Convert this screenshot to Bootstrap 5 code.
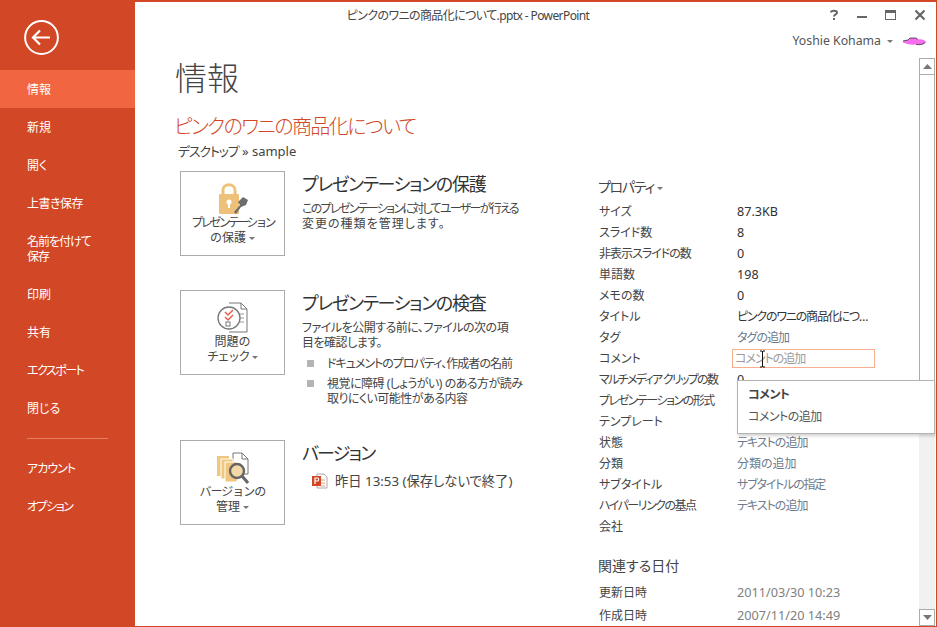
<!DOCTYPE html>
<html lang="ja">
<head>
<meta charset="utf-8">
<title>情報</title>
<link href="https://cdn.jsdelivr.net/npm/bootstrap@5.3.0/dist/css/bootstrap.min.css" rel="stylesheet">
<style>
html,body{height:100%;margin:0;overflow:hidden;background:#fff}
body{font-family:"Noto Sans","Noto Sans CJK JP",sans-serif;font-size:12px;color:#444;font-feature-settings:"palt"}
.frame{width:937px;height:627px;border:solid #d24726;border-width:2px 1px 1px 0;overflow:hidden;position:relative}
.side{width:135px;background:#d24726;color:#fff;flex:none}
.backbtn{height:68px;padding:18px 0 0 24px}
.mitem{display:flex;align-items:center;height:38px;padding-left:27px;font-size:12px;line-height:15px;color:#fff}
.mitem.tall{height:53px}
.mitem.on{background:#f16640}
.msep{height:22px;display:flex;align-items:center;padding:0 27px}
.msep i{display:block;width:100%;height:1px;background:#e4805f}
.mainp{min-width:0;position:relative}
.topbar{height:30px;position:relative;flex:none}
.wtitle{font-size:12px;text-align:center;padding-top:6px;line-height:16px;color:#444;margin-left:-135px;letter-spacing:-.6px}
.wbtns{position:absolute;right:10px;top:7px;gap:17px;color:#666}
.userrow{height:26px;flex:none;justify-content:flex-end;padding:0 10px 8px 0;gap:6px;font-size:12.3px;color:#555}
.bodyrow{min-height:0;overflow:hidden}
.caret{display:inline-block;width:0;height:0;border:solid transparent;border-width:3px 3px 0;border-top-color:#777;vertical-align:middle}
.scrollcol{width:16px;flex:none;margin-right:1px;background:#f1f1f1;position:relative}
.sbtn{height:17px;flex:none;border:1px solid #ababab;background:#fff;display:flex;align-items:center;justify-content:center}
.sthumb{height:351px;flex:none;border:1px solid #ababab;border-top:0;background:#fff}
.sfill{flex:1}
.content{padding:0 0 0 42px;min-width:0}
.pagetitle{font-size:32px;line-height:40px;font-weight:300;color:#444;margin:0 0 0 -2px;height:42px}
.doctitle{font-size:20px;line-height:28px;color:#d24726;margin:13px 0 0 -3px;font-weight:300;letter-spacing:-1.6px}
.docpath{font-size:13px;line-height:18px;color:#444;margin:1px 0 0 1px}
.cols{margin-top:11px;margin-left:3px}
.leftcol{width:418px;flex:none}
.sect{height:150px;gap:17px}
.sect.firstsect{height:119px}
.bigbtn{width:105px;height:85px;border:1px solid #ababab;background:#fff;padding:0;text-align:center;font-size:12px;line-height:15px;color:#444;display:flex;flex-direction:column;align-items:center;flex:none;border-radius:0}
.bigbtn svg{margin-top:9px;margin-bottom:-2px;flex:none}
.secth{font-size:18px;line-height:24px;color:#333;margin:1px 0 5px;font-weight:400;letter-spacing:-1.3px;white-space:nowrap}
.secth.ver{letter-spacing:-1.8px}
.sectp{font-size:12px;line-height:15px;margin:0;color:#444;width:225px;white-space:nowrap}
.bul{list-style:none;padding:0;margin:6px 0 0}
.bul li{position:relative;padding-left:25px;line-height:15px;margin-bottom:5px;width:228px;white-space:nowrap}
.bul li::before{content:"";position:absolute;left:5px;top:4px;width:7px;height:7px;background:#b4b4b4}
.verline{font-size:13.3px;line-height:18px;margin:7px 0 0 10px;gap:7px;display:flex;align-items:center}
.rightcol{width:310px;padding-top:6px;margin-left:1px}
.proph{font-size:14px;line-height:20px;color:#444;margin:0 0 4px -1px;font-weight:400;letter-spacing:-1.3px}
.proph .caret{margin-left:3px}
.prow{height:21px;display:flex;align-items:center;line-height:15px;white-space:nowrap}
.prow.dt{height:23px}
.plab{width:138px;flex:none;color:#444}
.pval{color:#333;font-size:12.6px}
.pmuted{color:#6d7b8d}
.pgrey{color:#808080;font-size:12.7px}
.commentbox{width:143px;height:19px;border:1px solid #f7b08f;margin-left:-5px;padding-left:2px;color:#9a9a9a;line-height:17px;position:relative}
.ibeam{position:absolute;left:26px;top:0;width:7px;height:18px}
.gaph{font-size:14px;line-height:20px;color:#444;margin:19px 0 5px -1px;font-weight:400}
.tip{position:absolute;left:602px;top:322px;width:198px;height:54px;background:#fff;border:1px solid #b4b4b4;box-shadow:1px 2px 3px rgba(0,0,0,.18);padding:6px 10px;line-height:15px;z-index:5;margin:0}
.tip b{display:block;font-weight:700;color:#444;margin-bottom:7px}
.tip span{color:#555}
.ls5{letter-spacing:-.5px}
.ls10{letter-spacing:-1px}
.ls12{letter-spacing:-1.2px}
.ls15{letter-spacing:-1.5px}
.ls17{letter-spacing:-1.7px}
.ls28{letter-spacing:-2.8px}
.lsp{letter-spacing:1px}
.val12{font-size:12px;letter-spacing:-1.2px}
</style>
</head>
<body>
<div class="frame d-flex">
  <nav class="side d-flex flex-column">
    <div class="backbtn">
      <svg width="36" height="36" viewBox="0 0 36 36"><circle cx="17.5" cy="17.5" r="16.4" fill="none" stroke="#fff" stroke-width="2"/><path d="M9 17.5H26M16 10.5L9 17.5L16 24.5" fill="none" stroke="#fff" stroke-width="2.2"/></svg>
    </div>
    <div class="mitem on">情報</div>
    <div class="mitem">新規</div>
    <div class="mitem">開く</div>
    <div class="mitem ls5">上書き保存</div>
    <div class="mitem tall ls10">名前を付けて<br>保存</div>
    <div class="mitem">印刷</div>
    <div class="mitem">共有</div>
    <div class="mitem ls15">エクスポート</div>
    <div class="mitem">閉じる</div>
    <div class="msep"><i></i></div>
    <div class="mitem ls10">アカウント</div>
    <div class="mitem ls15">オプション</div>
  </nav>
  <div class="mainp flex-grow-1 d-flex flex-column">
    <div class="topbar">
      <div class="wtitle">ピンクのワニの商品化について.pptx - PowerPoint</div>
      <div class="wbtns d-flex align-items-center">
        <svg width="10" height="12" viewBox="0 0 10 12"><path d="M2 3.5C2 1 8 1 8 3.5C8 5.5 5 5.3 5 7.5M5 9V11" fill="none" stroke="#666" stroke-width="2"/></svg>
        <svg width="12" height="12" viewBox="0 0 12 12"><rect x="1" y="7" width="10" height="2" fill="#666"/></svg>
        <svg width="12" height="12" viewBox="0 0 12 12"><rect x=".5" y="1.5" width="10" height="9" fill="none" stroke="#666"/><rect x="0" y="1" width="11" height="3" fill="#666"/></svg>
        <svg width="12" height="12" viewBox="0 0 12 12"><path d="M1.5 1.5L10.5 10.5M10.5 1.5L1.5 10.5" stroke="#666" stroke-width="2.2"/></svg>
      </div>
    </div>
    <div class="userrow d-flex align-items-center">
      <span>Yoshie Kohama</span><span class="caret"></span>
      <svg class="ms-1" width="23" height="9" viewBox="0 0 23 9"><path d="M0 4L5 3L7 1H13L15 2.5C19 2 22 3 22.500 5C22 7.500 18 8 13 7.500C8 8 3 7 0 5.500Z" fill="#f76df0"/><path d="M0 4L5 3L7 1H13L15 2.5" fill="none" stroke="#222" stroke-width=".7"/><path d="M13 7.500C17 8 21 7.500 22.500 5" fill="none" stroke="#222" stroke-width=".7"/></svg>
    </div>
    <div class="bodyrow d-flex flex-grow-1 position-relative">
      <div class="content flex-grow-1">
        <h1 class="pagetitle">情報</h1>
        <h2 class="doctitle">ピンクのワニの商品化について</h2>
        <div class="docpath"><span class="ls12">デスクトップ</span> » sample</div>
        <div class="cols d-flex">
          <div class="leftcol">
            <div class="sect firstsect d-flex">
              <button class="bigbtn btn" type="button">
                <svg width="36" height="36" viewBox="0 0 36 36"><path d="M8 13V9C8 2 20 2 20 9V13" fill="none" stroke="#eec17a" stroke-width="3"/><rect x="4" y="13" width="20" height="20" rx="1" fill="#eec17a"/><circle cx="14" cy="21" r="2.500" fill="#fff"/><rect x="13" y="21" width="2" height="6" fill="#fff"/><path d="M19 31L25 24L23 21L28 16L33 19L31 24L26 26L21 33Z" fill="#6d6d6d"/></svg>
                <span><span class="ls28">プレゼンテーション</span><br>の保護 <span class="caret"></span></span>
              </button>
              <div>
                <h3 class="secth">プレゼンテーションの保護</h3>
                <p class="sectp"><span class="ls17">このプレゼンテーションに対してユーザーが行える</span><br><span class="lsp">変更の種類を管理します。</span></p>
              </div>
            </div>
            <div class="sect d-flex">
              <button class="bigbtn btn" type="button">
                <svg width="36" height="36" viewBox="0 0 36 36"><path d="M14 3H26L32 9V32H14" fill="#fff" stroke="#777"/><path d="M26 3V9H32" fill="none" stroke="#777"/><path d="M23 14H29M23 18H29M23 22H29" stroke="#999"/><circle cx="14" cy="18" r="11" fill="#fff" stroke="#777" stroke-width="1.300"/><path d="M10 12L13 15L18 10M10 17L13 20L18 15" fill="none" stroke="#e8604a" stroke-width="1.500"/><rect x="11" y="22" width="4" height="4" fill="none" stroke="#777"/></svg>
                <span>問題の<br><span class="ls15">チェック</span> <span class="caret"></span></span>
              </button>
              <div>
                <h3 class="secth">プレゼンテーションの検査</h3>
                <p class="sectp ls5">ファイルを公開する前に、ファイルの次の項<br>目を確認します。</p>
                <ul class="bul">
                  <li class="ls10">ドキュメントのプロパティ、作成者の名前</li>
                  <li class="ls5">視覚に障碍 (しょうがい) のある方が読み<br>取りにくい可能性がある内容</li>
                </ul>
              </div>
            </div>
            <div class="sect d-flex">
              <button class="bigbtn btn" type="button">
                <svg width="36" height="36" viewBox="0 0 36 36"><path d="M18 3H27L33 9V24H18Z" fill="#fff" stroke="#777"/><path d="M27 3V9H33" fill="none" stroke="#777"/><rect x="2" y="6" width="12" height="20" fill="#f0c77f"/><rect x="6" y="9" width="12" height="20" fill="#f0c77f" stroke="#fff"/><rect x="10" y="12" width="12" height="20" fill="#f0c77f" stroke="#fff"/><circle cx="22" cy="21" r="7" fill="#f3d9a8" stroke="#666" stroke-width="2.400"/><path d="M27 26L33 33" stroke="#666" stroke-width="3"/></svg>
                <span><span class="ls10">バージョンの</span><br>管理 <span class="caret"></span></span>
              </button>
              <div>
                <h3 class="secth ver">バージョン</h3>
                <div class="verline">
                  <svg width="16" height="16" viewBox="0 0 16 16"><path d="M5 1H12L15 4V15H5Z" fill="#fff" stroke="#aaa"/><path d="M9 7H13M9 10H13M9 13H13" stroke="#e79a7f"/><rect x="0" y="3" width="9" height="10" fill="#d24726"/><path d="M3 11V5H5.500C7 5 7 8 5.500 8H3" fill="none" stroke="#fff" stroke-width="1.200"/></svg>
                  <span>昨日 13:53 (保存しないで終了)</span>
                </div>
              </div>
            </div>
          </div>
          <div class="rightcol">
            <h3 class="proph">プロパティ<span class="caret"></span></h3>
            <div class="prow"><span class="plab">サイズ</span><span class="pval">87.3KB</span></div>
            <div class="prow"><span class="plab">スライド数</span><span class="pval">8</span></div>
            <div class="prow"><span class="plab"><span class="ls10">非表示スライドの数</span></span><span class="pval">0</span></div>
            <div class="prow"><span class="plab">単語数</span><span class="pval">198</span></div>
            <div class="prow"><span class="plab">メモの数</span><span class="pval">0</span></div>
            <div class="prow"><span class="plab">タイトル</span><span class="pval val12">ピンクのワニの商品化につ…</span></div>
            <div class="prow"><span class="plab">タグ</span><span class="pmuted ls10">タグの追加</span></div>
            <div class="prow"><span class="plab">コメント</span><span class="commentbox"><span class="ls10">コメントの追加</span>
              <svg class="ibeam" viewBox="0 0 7 18"><path d="M1 1H3L3.500 2L4 1H6M3.500 2V16M1 17H3L3.500 16L4 17H6" fill="none" stroke="#111"/></svg></span></div>
            <div class="prow"><span class="plab"><span class="ls17">マルチメディア クリップの数</span></span><span class="pval">0</span></div>
            <div class="prow"><span class="plab"><span class="ls15">プレゼンテーションの形式</span></span></div>
            <div class="prow"><span class="plab">テンプレート</span></div>
            <div class="prow"><span class="plab">状態</span><span class="pmuted ls10">テキストの追加</span></div>
            <div class="prow"><span class="plab">分類</span><span class="pmuted">分類の追加</span></div>
            <div class="prow"><span class="plab">サブタイトル</span><span class="pmuted ls12">サブタイトルの指定</span></div>
            <div class="prow"><span class="plab"><span class="ls15">ハイパーリンクの基点</span></span><span class="pmuted ls10">テキストの追加</span></div>
            <div class="prow"><span class="plab">会社</span></div>
            <h3 class="gaph">関連する日付</h3>
            <div class="prow dt"><span class="plab">更新日時</span><span class="pgrey">2011/03/30 10:23</span></div>
            <div class="prow dt"><span class="plab">作成日時</span><span class="pgrey">2007/11/20 14:49</span></div>
          </div>
        </div>
      </div>
      <div class="scrollcol d-flex flex-column">
        <div class="sbtn"><svg width="9" height="5" viewBox="0 0 9 5"><path d="M4.500 0L9 5H0Z" fill="#777"/></svg></div>
        <div class="sthumb"></div>
        <div class="sfill"></div>
        <div class="sbtn"><svg width="9" height="5" viewBox="0 0 9 5"><path d="M0 0H9L4.500 5Z" fill="#777"/></svg></div>
      </div>
      <div class="tip"><b class="ls5">コメント</b><span class="ls5">コメントの追加</span></div>
    </div>
  </div>
</div>
</body>
</html>
